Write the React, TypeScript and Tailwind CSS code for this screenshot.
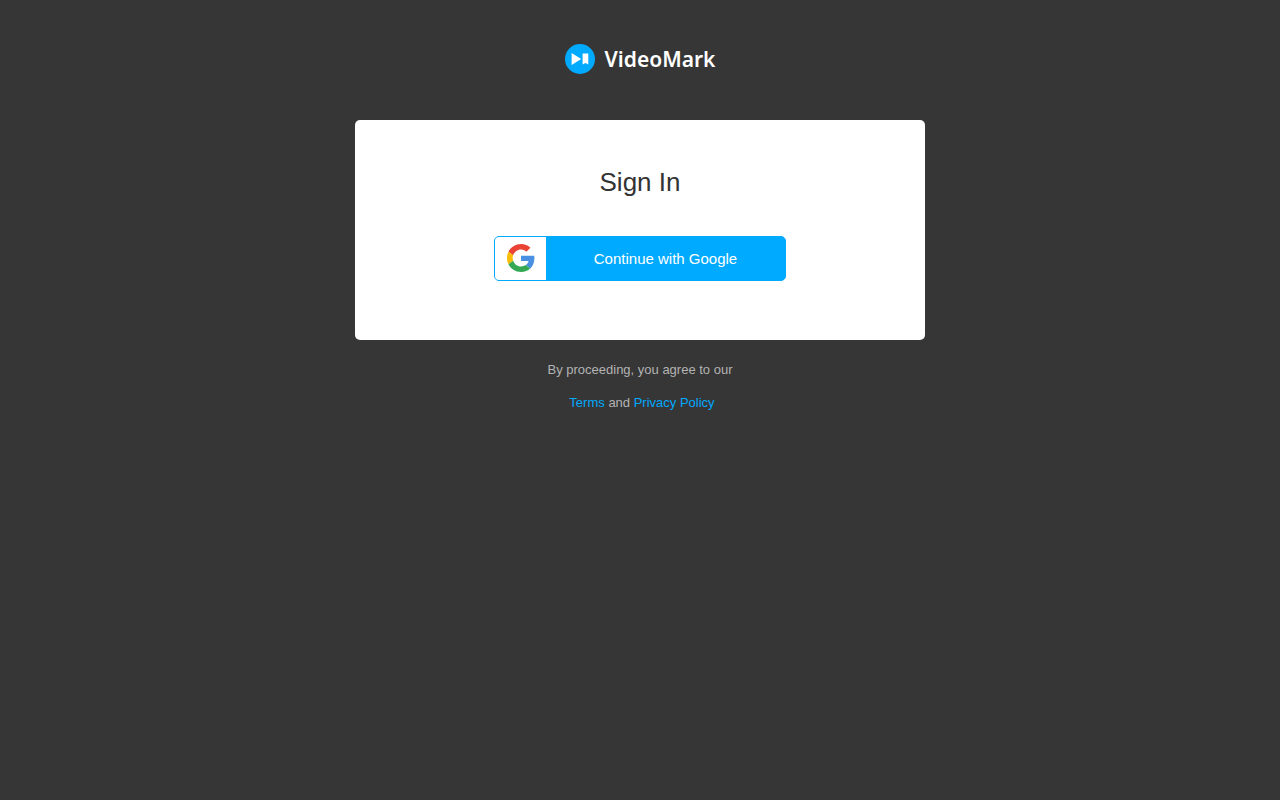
function LogoMark() {
  return (
    <svg viewBox="0 0 30 30" className="h-[30px] w-[30px] shrink-0" aria-hidden="true">
      <circle cx="15" cy="15" r="15" fill="#00aaff" />
      <path d="M6.6 9.1v11.8l9.6-5.9z" fill="#fff" />
      <path d="M17.6 9.6h5.7v11l-2.85-1.5-2.85 1.5z" fill="#fff" />
    </svg>
  );
}

function GoogleIcon() {
  return (
    <svg viewBox="0 0 48 48" className="h-7 w-7" aria-hidden="true">
      <path
        fill="#EA4335"
        d="M24 9.5c3.54 0 6.71 1.22 9.21 3.6l6.85-6.85C35.9 2.38 30.47 0 24 0 14.62 0 6.51 5.38 2.56 13.22l7.98 6.19C12.43 13.72 17.74 9.5 24 9.5z"
      />
      <path
        fill="#4A90E2"
        d="M46.98 24.55c0-1.57-.15-3.09-.38-4.55H24v9.02h12.94c-.58 2.96-2.26 5.48-4.78 7.18l7.73 6c4.51-4.18 7.09-10.36 7.09-17.65z"
      />
      <path
        fill="#FBBC05"
        d="M10.53 28.59c-.48-1.45-.76-2.99-.76-4.59s.27-3.14.76-4.59l-7.98-6.19C.92 16.46 0 20.12 0 24c0 3.88.92 7.54 2.56 10.78l7.97-6.19z"
      />
      <path
        fill="#34A853"
        d="M24 48c6.48 0 11.93-2.13 15.89-5.81l-7.73-6c-2.15 1.45-4.92 2.3-8.16 2.3-6.26 0-11.57-4.22-13.47-9.91l-7.98 6.19C6.51 42.62 14.62 48 24 48z"
      />
    </svg>
  );
}

export default function App() {
  return (
    <div className="flex min-h-screen flex-col items-center bg-[#363636] px-4 font-['Liberation_Sans',Arial,sans-serif]">
      <header className="flex h-[120px] items-center pb-0.5">
        <a href="#" className="flex items-center gap-2.5 text-white">
          <LogoMark />
          <span className="font-['Noto_Sans',sans-serif] text-[21px] leading-[30px] font-semibold">
            VideoMark
          </span>
        </a>
      </header>

      <main className="flex w-full max-w-[570px] flex-col items-center rounded-[5px] bg-white px-4 pt-11 pb-[59px]">
        <h1 className="text-[26px] leading-9 text-[#333]">Sign In</h1>
        <button
          type="button"
          className="mt-9 flex h-[45px] w-full max-w-[292px] overflow-hidden rounded-[5px] border border-[#00aaff] bg-[#00aaff] text-[15px] leading-[23px] text-white"
        >
          <span className="flex h-full w-[51px] items-center justify-center bg-white pb-px">
            <GoogleIcon />
          </span>
          <span className="flex h-full flex-1 items-center justify-center">
            Continue with Google
          </span>
        </button>
      </main>

      <footer className="mt-5 flex flex-col items-center gap-[13px] text-[13px] leading-5 text-[#b3b3b3]">
        <p>By proceeding, you agree to our</p>
        <p className="pl-1">
          <a href="#" className="text-[#00aaff]">
            Terms
          </a>{' '}
          and{' '}
          <a href="#" className="text-[#00aaff]">
            Privacy Policy
          </a>
        </p>
      </footer>
    </div>
  );
}
